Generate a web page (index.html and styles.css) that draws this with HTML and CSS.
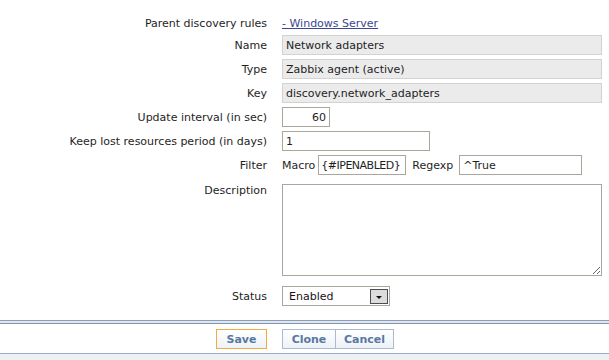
FILE: index.html
```html
<!DOCTYPE html>
<html lang="en">

<head>
    <meta charset="UTF-8">
    <title>Discovery rule</title>
    <link rel="stylesheet" href="styles.css">
</head>

<body>
    <form class="form">
        <div class="label">Parent discovery rules</div>
        <div class="value value--link"><a href="#" class="link">- Windows Server</a></div>

        <div class="label">Name</div>
        <div class="value"><input class="input input--ro input--wide" value="Network adapters" readonly /></div>

        <div class="label">Type</div>
        <div class="value"><input class="input input--ro input--wide" value="Zabbix agent (active)" readonly /></div>

        <div class="label">Key</div>
        <div class="value"><input class="input input--ro input--wide" value="discovery.network_adapters" readonly /></div>

        <div class="label">Update interval (in sec)</div>
        <div class="value"><input class="input input--num" value="60" /></div>

        <div class="label">Keep lost resources period (in days)</div>
        <div class="value"><input class="input input--mid" value="1" /></div>

        <div class="label">Filter</div>
        <div class="value filter">
            <span class="filter__label">Macro</span>
            <input class="input input--macro" value="{#IPENABLED}" />
            <span class="filter__label filter__label--regexp">Regexp</span>
            <input class="input input--regexp" value="^True" />
        </div>

        <div class="label label--top">Description</div>
        <div class="value value--desc"><textarea class="textarea"></textarea></div>

        <div class="label label--status">Status</div>
        <div class="value value--status">
            <div class="select">
                <span>Enabled</span>
                <span class="select__arrow"></span>
            </div>
        </div>
    </form>

    <div class="footer">
        <div class="footer__rule"></div>
        <div class="footer__buttons">
            <div class="save-cell"><button class="btn btn--save">Save</button></div>
            <div class="btn-group">
                <button class="btn">Clone</button>
                <button class="btn btn--last">Cancel</button>
            </div>
        </div>
    </div>
    <div class="bottom"></div>
</body>

</html>
```

FILE: styles.css
```css
* {
    box-sizing: border-box;
    margin: 0;
    padding: 0;
}

body {
    width: 609px;
    height: 360px;
    overflow: hidden;
    font-family: 'DejaVu Sans', Verdana, sans-serif;
    font-size: 11px;
    color: #1e1e1e;
    background-color: #ffffff;
    display: flex;
    flex-direction: column;
}

.form {
    display: grid;
    grid-template-columns: 267px 320px;
    column-gap: 15px;
    row-gap: 4px;
    padding-top: 15px;
    padding-bottom: 14px;
}

.label {
    text-align: right;
    align-self: center;
    white-space: nowrap;
}

.label--top {
    align-self: start;
    margin-top: 5px;
}

.label--status {
    margin-top: 6px;
}

.value {
    display: flex;
    align-items: center;
    min-height: 20px;
}

.value--link {
    min-height: 16px;
}

.value--desc {
    margin-top: 5px;
}

.value--status {
    margin-top: 6px;
}

.link {
    color: #3d4690;
    text-decoration: underline;
}

.input {
    height: 20px;
    line-height: 18px;
    border: 1px solid #aaa69b;
    background-color: #ffffff;
    font-family: inherit;
    font-size: 11px;
    color: #1e1e1e;
    padding: 0 3px;
    outline: none;
}

.input--ro {
    background-color: #ebebeb;
    border-color: #d2d2d0;
}

.input--wide {
    width: 320px;
}

.input--num {
    width: 48px;
    text-align: right;
}

.input--mid {
    width: 148px;
}

.filter__label {
    margin-right: 3px;
}

.filter__label--regexp {
    margin-right: 6px;
}

.input--macro {
    width: 88px;
    margin-right: 6px;
    padding: 0 2px;
    letter-spacing: -0.5px;
}

.input--regexp {
    width: 123px;
}

.textarea {
    width: 320px;
    height: 92px;
    border: 1px solid #aaa69b;
    font-family: inherit;
    font-size: 11px;
    outline: none;
}

.select {
    width: 108px;
    height: 20px;
    border: 1px solid #aaa69b;
    display: flex;
    align-items: center;
    justify-content: space-between;
    padding: 0 1px 0 6px;
    color: #1a0f1a;
}

.select__arrow {
    width: 18px;
    height: 15px;
    border: 1px solid #4d4d4d;
    background-color: #dcdcdc;
    display: flex;
    align-items: center;
    justify-content: center;
}

.select__arrow::after {
    content: "";
    margin-top: 3px;
    border-left: 3px solid transparent;
    border-right: 3px solid transparent;
    border-top: 3px solid #111111;
}

.footer__rule {
    height: 4px;
    border-top: 1px solid #8a9db4;
    border-bottom: 1px solid #7f97b1;
    background-color: #dfe6ee;
}

.footer__buttons {
    display: grid;
    grid-template-columns: 267px auto;
    column-gap: 15px;
    padding: 5px 0 4px;
    border-bottom: 1px solid #9aadc3;
}

.save-cell {
    display: flex;
    justify-content: flex-end;
}

.btn-group {
    display: flex;
}

.btn {
    height: 20px;
    padding: 0;
    border: 1px solid #a9bbd2;
    background: linear-gradient(#ffffff, #eef2f7);
    color: #5878a2;
    font-family: inherit;
    font-size: 11px;
    font-weight: bold;
    cursor: pointer;
}

.btn--save {
    width: 51px;
    border-color: #f4aa3e;
}

.btn-group .btn {
    width: 54px;
}

.btn-group .btn--last {
    width: 58px;
    border-left: none;
}

.bottom {
    flex: 1;
    background-color: #edf0f4;
}
```
